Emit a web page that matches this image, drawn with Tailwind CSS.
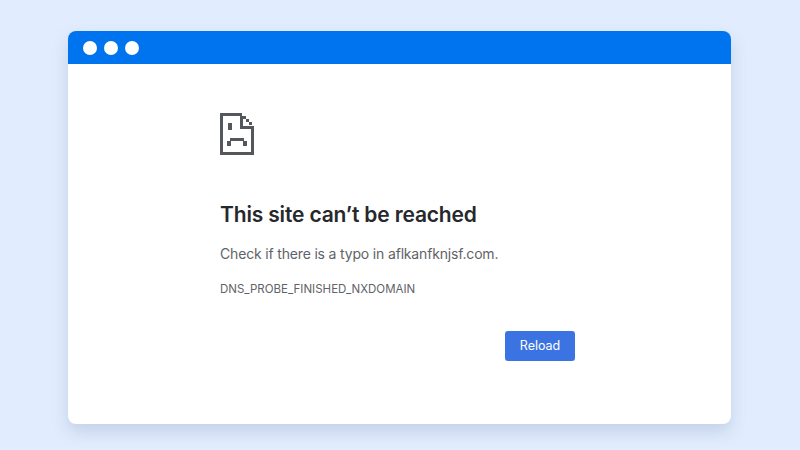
<!DOCTYPE html>
<html lang="en">
  <head>
    <meta charset="UTF-8">
    <script src="https://cdn.jsdelivr.net/npm/@tailwindcss/browser@4"></script>
    <title>This site can't be reached</title>
  </head>
  <body class="w-[800px] h-[450px] overflow-hidden bg-[#e1edfe] font-['Inter',sans-serif]">
    <div class="pt-[31px] pl-[68px]">
      <!-- window -->
      <div class="w-[663px] h-[393px] rounded-[8px] bg-white shadow-[0_8px_16px_rgba(90,110,150,0.22)] overflow-hidden">
        <div class="h-[33px] bg-[#0073ee] flex items-center gap-[7px] pl-[15px]">
          <span class="w-[14px] h-[14px] rounded-full bg-white"></span>
          <span class="w-[14px] h-[14px] rounded-full bg-white"></span>
          <span class="w-[14px] h-[14px] rounded-full bg-white"></span>
        </div>
        <div class="pl-[152px] pt-[49px] w-[507px]">
          <!-- sad page icon -->
          <svg class="block" width="34" height="42" viewBox="0 0 34 42" fill="#54575b" shape-rendering="crispEdges">
            <path d="M0 0H22V3H3V39H31V16H20V3H23V13H34V42H0Z"/>
            <path d="M23 3H26V6H23ZM26 6H29V9H26ZM29 9H32V12H29Z"/>
            <path d="M8 10H12V17H8Z"/>
            <path d="M10 25H24V28H27V33H23V28H11V33H7V28H10Z"/>
          </svg>
          <h1 class="mt-[46px] text-[21px] leading-[28px] font-semibold tracking-[-0.16px] text-[#26282b]">This site can’t be reached</h1>
          <p class="mt-[14px] text-[14px] leading-[22px] tracking-[-0.17px] text-[#5f6368]">Check if there is a typo in aflkanfknjsf.com.</p>
          <p class="mt-[16px] text-[11.5px] leading-[16px] text-[#5f6368]">DNS_PROBE_FINISHED_NXDOMAIN</p>
          <div class="mt-[34px] flex justify-end">
            <button class="w-[70px] h-[30px] rounded-[3px] bg-[#3b74e2] text-white text-[12.5px] font-['Inter',sans-serif]">Reload</button>
          </div>
        </div>
      </div>
    </div>
  </body>
</html>
